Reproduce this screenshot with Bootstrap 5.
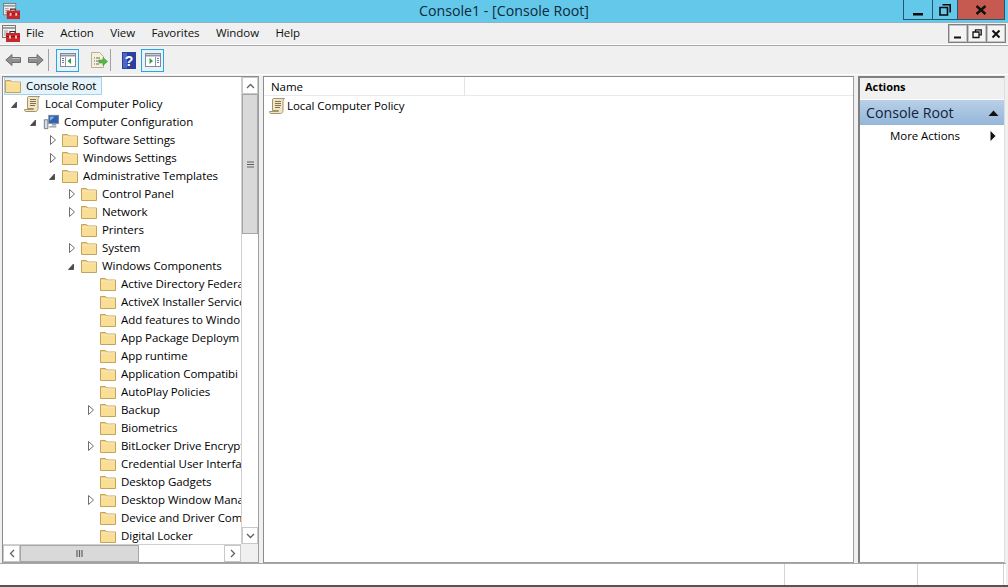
<!DOCTYPE html>
<html lang="en">
<head>
  <meta charset="UTF-8">
  <title>Console1 - [Console Root]</title>
  <link href="https://cdn.jsdelivr.net/npm/bootstrap@5.3.3/dist/css/bootstrap.min.css" rel="stylesheet">
  <script src="https://cdn.jsdelivr.net/npm/bootstrap@5.3.3/dist/js/bootstrap.bundle.min.js"></script>
  <style>
    html, body { height: 100%; overflow: hidden; }
    body {
      background: #f0f0f0;
      font-family: "Open Sans", "Noto Sans", sans-serif;
      font-size: 11.5px;
      letter-spacing: -.06px;
      color: #000;
      line-height: 18px;
    }
    svg { display: block; flex: none; }
    .mmc-window { width: 1008px; height: 587px; border-bottom: 2px solid #555; }
    .mmc-window > div { flex: none; }

    .title-bar { height: 23px; background: #63c8ea; border-bottom: 1px solid #8fb4c4; padding-left: 3px; }
    .title-ico { margin-top: 3px; }
    .title-text { font-size: 14.2px; letter-spacing: 0; color: #0c2a3a; left: 0; right: 0; top: 2px; text-align: center; }
    .win-btns { height: 20px; margin-right: 3px; z-index: 1; }
    .win-btn { height: 20px; border: 1px solid #26566a; border-top: 0; margin-left: -1px; }
    .win-min { width: 30px; }
    .win-max { width: 26px; }
    .win-close { width: 48px; background: #c75a50; }

    .menu-bar { height: 22px; padding-left: 2px; border-bottom: 1px solid #fff; }
    .menu-ico { margin-top: 2px; }
    .menu-items { padding-left: 6px; }
    .menu-item { margin-right: 16.4px; line-height: 20px; color: #111; }
    .child-btns { margin-right: 2px; margin-top: 1px; }
    .child-btn { width: 20px; height: 19px; border: 1px solid #808080; background: #f4f4f4; margin-left: -1px; outline: 1px solid #c4c4c4; outline-offset: -2px; }

    .tool-bar { height: 29px; padding-left: 5px; border-top: 1px solid #a8a8a8; }
    .tool-sep { width: 1px; height: 22px; background: #a0a0a0; }
    .tool-on { width: 23px; height: 23px; border: 1px solid #2ba5e0; background: #e6f3fb; }
    .gap-fwd { margin-left: 7px; }
    .gap-sep { margin-left: 4px; }
    .gap-on { margin-left: 7px; }
    .gap-exp { margin-left: 11px; }
    .gap-sep2 { margin-left: 2px; }
    .gap-help { margin-left: 11px; }
    .gap-on2 { margin-left: 5px; }

    .panes { height: 489px; padding: 1px 2px 0 2px; gap: 4px; border-top: 1px solid #fff; }
    .pane { background: #fff; border: 1px solid #a0a0a0; border-top-color: #8c8c8c; border-left-color: #8c8c8c; min-height: 0; }
    .pane-tree { width: 257px; }
    .pane-list { width: 591px; }
    .pane-actions { width: 147px; border-left: 2px solid #808080; border-top: 2px solid #808080; border-right-color: #ddd; }

    .tree-area { height: 467px; }
    .tree-rows { width: 238px; overflow: hidden; }
    .tree-row { height: 18px; white-space: nowrap; }
    .tree-row.sel { width: 98px; background: #e5f3fb; box-shadow: inset 0 0 0 1px #a8d0ea; margin-left: 1px; padding-left: 1px; }
    .tree-row .lbl { margin-left: 5px; }
    .tw { width: 13px; height: 10px; flex: none; }
    .lv0 { padding-left: 2px; }
    .lv1 { padding-left: 8px; }
    .lv2 { padding-left: 27px; }
    .lv3 { padding-left: 46px; }
    .lv4 { padding-left: 65px; }
    .lv5 { padding-left: 84px; }

    .vscroll { width: 17px; background: #fff; border-left: 1px solid #d0d0d0; }
    .sb-btn { background: #fff; border: 1px solid #c8c8c8; }
    .vscroll .sb-end { height: 17px; }
    .v-thumb { height: 140px; background: #d9d9d9; border: 1px solid #a6a6a6; }
    .hscroll-row { height: 18px; }
    .hscroll { width: 238px; background: #fff; border-top: 1px solid #d0d0d0; }
    .hscroll .sb-btn { width: 17px; }
    .h-thumb { width: 119px; background: #d9d9d9; border: 1px solid #a6a6a6; }
    .sb-corner { width: 17px; background: #f0f0f0; }

    .list-head { height: 19px; border-bottom: 1px solid #eaeaea; }
    .list-col { width: 201px; padding-left: 7px; border-right: 1px solid #e4e4e4; line-height: 19px; }
    .list-row { padding-left: 5px; height: 19px; }
    .list-row .lbl { margin-left: 2px; }

    .act-head { height: 22px; background: #f0f0f0; font-weight: 700; padding-left: 5px; line-height: 18px; border-bottom: 1px solid #fff; font-size: 11px; }
    .act-title { height: 25px; background: linear-gradient(#b9d0e8, #94b6d8); padding: 1px 5px 0 6px; font-size: 14.2px; letter-spacing: 0; color: #10233c; }
    .act-more { height: 22px; padding: 0 8px 0 30px; }

    .status-bar { height: 22px; border-top: 1px solid #a8a8a8; background: #fff; margin-right: 2px; }
    .status-cell { border-right: 1px solid #d4d4d4; }
    .status-1 { width: 785px; }
    .status-2 { width: 133px; }
    .status-3 { width: 86px; }
  </style>
</head>
<body>
  <svg width="0" height="0" style="position:absolute">
    <defs>
      <symbol id="i-folder" viewBox="0 0 16 16">
        <path d="M.5 14.500V2.500h5l1.500 1.500h8.500v10.500z" fill="#f3cf7a" stroke="#c4a35c"/>
        <path d="M1 6h14v8H1z" fill="#f9df96"/>
        <path d="M1 5h14" stroke="#fff6d8"/>
      </symbol>
      <symbol id="i-scroll" viewBox="0 0 16 16">
        <path d="M4.500 .5h11c-1 1-1.500 2-1.500 3v9c0 1.500-1 3-2.500 3H1.500C.7 15.500 .5 14.500 .5 13.500h9v-1h-6V3c0-1.500 0-2.500 1-2.500z" fill="#f1e5c3" stroke="#a3946a"/>
        <path d="M6 3.500h6M6 5.500h6M6 7.500h6M6 9.500h5" stroke="#7c7358"/>
      </symbol>
      <symbol id="i-comp" viewBox="0 0 18 16">
        <rect x="6.500" y=".5" width="11" height="9" fill="#2d62b5" stroke="#79808a"/>
        <path d="M8 2h5l-5 4.500z" fill="#7fb8ee"/>
        <path d="M10 10h5v2h-5z" fill="#9aa2ab"/>
        <path d="M1.500 5.500h4v10h-4z" fill="#d8dde3" stroke="#6a7480"/>
        <path d="M7 13.500h8" stroke="#5c6a78"/>
      </symbol>
      <symbol id="i-open" viewBox="0 0 13 10"><path d="M5.500 3v5.500H.5z" fill="#4a4a4a" stroke="#555"/></symbol>
      <symbol id="i-closed" viewBox="0 0 13 10"><path d="M1.500 .5l5 4.500-5 4.500z" fill="#fff" stroke="#6d6d6d"/></symbol>
      <symbol id="i-toolbox" viewBox="0 0 18 18">
        <rect x=".5" y=".5" width="13" height="12" fill="#f0f0f0" stroke="#7a7a7a"/>
        <path d="M1 3h12" stroke="#a0a0a0" stroke-width="2"/>
        <path d="M2 6h4M2 8h4M2 10h4" stroke="#9a9a9a"/>
        <path d="M8 8V6.500h5V8" fill="none" stroke="#333" stroke-width="1.200"/>
        <rect x="4" y="8" width="14" height="9" fill="#c8282c"/>
        <path d="M4 11.500h14" stroke="#8f1216"/>
        <path d="M7 10.500h2v3H7zM13 10.500h2v3h-2z" fill="#f2c1b8"/>
      </symbol>
    </defs>
  </svg>

  <div class="mmc-window d-flex flex-column">
    <!-- title bar -->
    <div class="title-bar d-flex justify-content-between position-relative">
      <svg width="17" height="17" class="title-ico"><use href="#i-toolbox"/></svg>
      <div class="title-text position-absolute">Console1 - [Console Root]</div>
      <div class="win-btns d-flex">
        <div class="win-btn win-min d-flex align-items-center justify-content-center">
          <svg width="12" height="12"><path d="M1 9h10v2.500H1z" fill="#0a0a0a"/></svg>
        </div>
        <div class="win-btn win-max d-flex align-items-center justify-content-center">
          <svg width="12" height="12"><path d="M3.500 .8h7.700v7.700M1 3.500h7.500v7.500H1z" fill="none" stroke="#0a0a0a" stroke-width="1.600"/></svg>
        </div>
        <div class="win-btn win-close d-flex align-items-center justify-content-center">
          <svg width="12" height="10"><path d="M1.500 1l9 8M10.500 1l-9 8" stroke="#111" stroke-width="2.400"/></svg>
        </div>
      </div>
    </div>

    <!-- menu -->
    <div class="menu-bar d-flex justify-content-between">
      <div class="d-flex">
        <svg width="18" height="18" class="menu-ico"><use href="#i-toolbox"/></svg>
        <div class="menu-items d-flex">
          <span class="menu-item">File</span>
          <span class="menu-item">Action</span>
          <span class="menu-item">View</span>
          <span class="menu-item">Favorites</span>
          <span class="menu-item">Window</span>
          <span class="menu-item">Help</span>
        </div>
      </div>
      <div class="child-btns d-flex">
        <div class="child-btn d-flex align-items-center justify-content-center"><svg width="10" height="10"><path d="M1 7.500h7v2H1z" fill="#111"/></svg></div>
        <div class="child-btn d-flex align-items-center justify-content-center"><svg width="10" height="10"><path d="M3.500 2.500V.8h5.700v5H7M1 3h6v5.500H1z" fill="none" stroke="#111" stroke-width="1.300"/></svg></div>
        <div class="child-btn d-flex align-items-center justify-content-center"><svg width="10" height="10"><path d="M1.500 1.500l7 7M8.500 1.500l-7 7" stroke="#111" stroke-width="2"/></svg></div>
      </div>
    </div>

    <!-- toolbar -->
    <div class="tool-bar d-flex align-items-center">
      <svg width="16" height="14"><path d="M.8 7L7 1.500V4.500h8.500v5H7v3z" fill="#8f8f8f" stroke="#6e6e6e"/><path d="M7 5.500h8" stroke="#bdbdbd"/></svg>
      <svg width="16" height="14" class="gap-fwd"><path d="M15.200 7L9 1.500V4.500H.5v5H9v3z" fill="#8f8f8f" stroke="#6e6e6e"/><path d="M1 5.500h8" stroke="#bdbdbd"/></svg>
      <div class="tool-sep gap-sep"></div>
      <div class="tool-on d-flex align-items-center justify-content-center gap-on">
        <svg width="16" height="16"><rect x=".5" y="1.500" width="15" height="13" fill="#fff" stroke="#7f8a94"/><path d="M1 3.500h14" stroke="#8d98a2" stroke-width="2"/><path d="M5.500 5v9" stroke="#8d98a2"/><path d="M2 6.500h2M2 8.500h2M2 10.500h2" stroke="#5b7fa6"/><path d="M11 6v6l-3.500-3z" fill="#2ea043"/></svg>
      </div>
      <svg width="18" height="18" class="gap-exp"><path d="M1.500 1.500h8l4 4v11h-12z" fill="#f6efd9" stroke="#b8b094"/><path d="M4 7h1M6 7h4M4 10h1M6 10h3M4 13h1M6 13h3" stroke="#666"/><path d="M9 9h4V6.500l4.500 4-4.500 4V12H9z" fill="#53b848" stroke="#3c9a35" stroke-width=".6"/></svg>
      <div class="tool-sep gap-sep2"></div>
      <svg width="14" height="17" class="gap-help"><rect width="14" height="17" fill="#2b3f9e"/><rect x="1" y="1" width="4" height="15" fill="#4d67c6"/><text x="7" y="14" fill="#fff" font-size="14" font-weight="700" text-anchor="middle" font-family="Liberation Sans">?</text></svg>
      <div class="tool-on d-flex align-items-center justify-content-center gap-on2">
        <svg width="16" height="16"><rect x=".5" y="1.500" width="15" height="13" fill="#fff" stroke="#7f8a94"/><path d="M1 3.500h14" stroke="#8d98a2" stroke-width="2"/><path d="M10.500 5v9" stroke="#8d98a2"/><path d="M12 6.500h2M12 8.500h2M12 10.500h2" stroke="#5b7fa6"/><path d="M4.500 6v6L8 9z" fill="#2ea043"/></svg>
      </div>
    </div>

    <!-- panes -->
    <div class="panes d-flex">
      <div class="pane pane-tree d-flex flex-column">
        <div class="tree-area d-flex">
          <div class="tree-rows" id="tree"></div>
          <div class="vscroll d-flex flex-column">
            <div class="sb-btn sb-end d-flex align-items-center justify-content-center"><svg width="9" height="6"><path d="M1 5l3.500-3.500L8 5" fill="none" stroke="#606060" stroke-width="1.300"/></svg></div>
            <div class="v-thumb d-flex align-items-center justify-content-center"><svg width="7" height="7"><path d="M0 1h7M0 3.500h7M0 6h7" stroke="#606060" stroke-width="1.200"/></svg></div>
            <div class="flex-grow-1"></div>
            <div class="sb-btn sb-end d-flex align-items-center justify-content-center"><svg width="9" height="6"><path d="M1 1l3.500 3.500L8 1" fill="none" stroke="#606060" stroke-width="1.300"/></svg></div>
          </div>
        </div>
        <div class="hscroll-row d-flex">
          <div class="hscroll d-flex">
            <div class="sb-btn d-flex align-items-center justify-content-center"><svg width="6" height="9"><path d="M5 1L1.500 4.500 5 8" fill="none" stroke="#606060" stroke-width="1.300"/></svg></div>
            <div class="h-thumb d-flex align-items-center justify-content-center"><svg width="7" height="7"><path d="M1 0v7M3.500 0v7M6 0v7" stroke="#606060" stroke-width="1.200"/></svg></div>
            <div class="flex-grow-1"></div>
            <div class="sb-btn d-flex align-items-center justify-content-center"><svg width="6" height="9"><path d="M1 1l3.500 3.500L1 8" fill="none" stroke="#606060" stroke-width="1.300"/></svg></div>
          </div>
          <div class="sb-corner"></div>
        </div>
      </div>

      <div class="pane pane-list">
        <div class="list-head"><div class="list-col">Name</div></div>
        <div class="list-row d-flex align-items-center">
          <svg width="16" height="16"><use href="#i-scroll"/></svg>
          <span class="lbl">Local Computer Policy</span>
        </div>
      </div>

      <div class="pane pane-actions">
        <div class="act-head">Actions</div>
        <div class="act-title d-flex justify-content-between align-items-center">
          <span>Console Root</span>
          <svg width="11" height="6"><path d="M.5 6L5.500.5 10.500 6z" fill="#111"/></svg>
        </div>
        <div class="act-more d-flex justify-content-between align-items-center">
          <span>More Actions</span>
          <svg width="6" height="10"><path d="M.5 0L5.500 5 .5 10z" fill="#111"/></svg>
        </div>
      </div>
    </div>

    <!-- status bar -->
    <div class="status-bar d-flex">
      <div class="status-cell status-1"></div>
      <div class="status-cell status-2"></div>
      <div class="status-cell status-3"></div>
    </div>
  </div>

  <script>
    // level, twisty (o open, c closed, empty none), icon, label as far as the pane shows it
    const righe = [
      [0, '', 'folder', 'Console Root', 'sel'],
      [1, 'o', 'scroll', 'Local Computer Policy'],
      [2, 'o', 'comp', 'Computer Configuration'],
      [3, 'c', 'folder', 'Software Settings'],
      [3, 'c', 'folder', 'Windows Settings'],
      [3, 'o', 'folder', 'Administrative Templates'],
      [4, 'c', 'folder', 'Control Panel'],
      [4, 'c', 'folder', 'Network'],
      [4, '', 'folder', 'Printers'],
      [4, 'c', 'folder', 'System'],
      [4, 'o', 'folder', 'Windows Components'],
      [5, '', 'folder', 'Active Directory Federa'],
      [5, '', 'folder', 'ActiveX Installer Service'],
      [5, '', 'folder', 'Add features to Windo'],
      [5, '', 'folder', 'App Package Deploym'],
      [5, '', 'folder', 'App runtime'],
      [5, '', 'folder', 'Application Compatibi'],
      [5, '', 'folder', 'AutoPlay Policies'],
      [5, 'c', 'folder', 'Backup'],
      [5, '', 'folder', 'Biometrics'],
      [5, 'c', 'folder', 'BitLocker Drive Encrypt'],
      [5, '', 'folder', 'Credential User Interfac'],
      [5, '', 'folder', 'Desktop Gadgets'],
      [5, 'c', 'folder', 'Desktop Window Mana'],
      [5, '', 'folder', 'Device and Driver Com'],
      [5, '', 'folder', 'Digital Locker']
    ];
    document.getElementById('tree').innerHTML = righe.map(r => {
      const tw = r[1] === 'o' ? '<svg class="tw"><use href="#i-open"/></svg>'
        : r[1] === 'c' ? '<svg class="tw"><use href="#i-closed"/></svg>'
        : '<span class="tw d-block"></span>';
      return `<div class="tree-row lv${r[0]} d-flex align-items-center ${r[4] || ''}">` +
        (r[0] ? tw : '') +
        `<svg width="16" height="16"><use href="#i-${r[2]}"/></svg>` +
        `<span class="lbl">${r[3]}</span></div>`;
    }).join('');
  </script>
</body>
</html>
